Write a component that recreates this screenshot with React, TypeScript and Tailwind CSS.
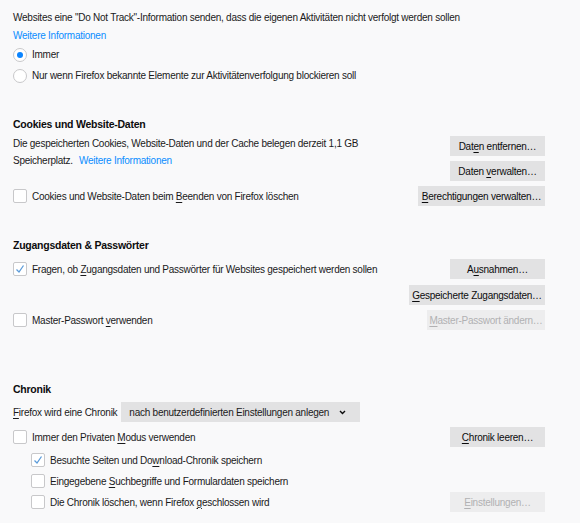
import React from "react";

const font = { fontFamily: '"Liberation Sans", Arial, sans-serif' };

function U({ children }: { children: React.ReactNode }) {
  return <span className="underline underline-offset-2">{children}</span>;
}

function Btn({
  children,
  disabled,
  className = "",
}: {
  children: React.ReactNode;
  disabled?: boolean;
  className?: string;
}) {
  return (
    <div
      className={`flex h-[20px] items-center justify-center whitespace-nowrap ${
        disabled ? "bg-[#ededee] text-[#b1b1b3]" : "bg-[#e2e2e3] text-[#0c0c0d]"
      } ${className}`}
    >
      <span>{children}</span>
    </div>
  );
}

function Check({ checked }: { checked?: boolean }) {
  return (
    <div className="flex h-[14px] w-[14px] shrink-0 items-center justify-center rounded-[2px] border border-[#c8c8ca] bg-white">
      {checked && (
        <svg width="10" height="10" viewBox="0 0 10 10">
          <path d="M1.5 5.5 L4 8 L8.5 1.5" fill="none" stroke="#5b9bd9" strokeWidth="1.3" />
        </svg>
      )}
    </div>
  );
}

function Radio({ checked }: { checked?: boolean }) {
  return (
    <div className="flex h-[14px] w-[14px] shrink-0 items-center justify-center rounded-full border border-[#c8c8ca] bg-white">
      {checked && <div className="h-[6px] w-[6px] rounded-full bg-[#0a84ff]" />}
    </div>
  );
}

function Header({ children, className = "" }: { children: React.ReactNode; className?: string }) {
  return (
    <div className={`flex h-[20px] items-center text-[10.5px] font-bold text-[#0c0c0d] ${className}`}>
      {children}
    </div>
  );
}

export default function App() {
  return (
    <div
      className="min-h-[523px] w-[580px] bg-[#f9f9fa] pt-[8px] pl-[13px] pr-[35px] text-[10px] tracking-[-0.25px] text-[#1a1a1b]"
      style={font}
    >
      {/* Do Not Track */}
      <div className="flex h-[18px] items-center whitespace-nowrap">
        Websites eine "Do Not Track"-Information senden, dass die eigenen Aktivitäten nicht verfolgt werden sollen
      </div>
      <div className="flex h-[18px] items-center text-[#0a8dff]">Weitere Informationen</div>
      <div className="flex h-[21px] items-center gap-[5px]">
        <Radio checked />
        <span>Immer</span>
      </div>
      <div className="flex h-[21px] items-center gap-[5px]">
        <Radio />
        <span>Nur wenn Firefox bekannte Elemente zur Aktivitätenverfolgung blockieren soll</span>
      </div>

      {/* Cookies */}
      <Header className="mt-[29px]">Cookies und Website-Daten</Header>
      <div className="flex justify-between">
        <div>
          <div className="flex h-[17px] items-center">
            Die gespeicherten Cookies, Website-Daten und der Cache belegen derzeit 1,1 GB
          </div>
          <div className="flex h-[17px] items-center">
            Speicherplatz.<span className="ml-[6px] text-[#0a8dff]">Weitere Informationen</span>
          </div>
        </div>
        <div className="mt-[1px] flex flex-col gap-[5px]">
          <Btn className="w-[95px]">
            Dat<U>e</U>n entfernen…
          </Btn>
          <Btn className="w-[95px]">
            Daten <U>v</U>erwalten…
          </Btn>
        </div>
      </div>
      <div className="mt-[5px] flex items-center justify-between">
        <div className="flex items-center gap-[5px]">
          <Check />
          <span>
            Cookies und Website-Daten beim <U>B</U>eenden von Firefox löschen
          </span>
        </div>
        <Btn className="w-[127px]">
          <U>B</U>erechtigungen verwalten…
        </Btn>
      </div>

      {/* Passwords */}
      <Header className="mt-[30px]">Zugangsdaten &amp; Passwörter</Header>
      <div className="mt-[3px] flex items-center justify-between">
        <div className="flex items-center gap-[5px]">
          <Check checked />
          <span>
            Fragen, ob <U>Z</U>ugangsdaten und Passwörter für Websites gespeichert werden sollen
          </span>
        </div>
        <Btn className="w-[95px]">
          A<U>u</U>snahmen…
        </Btn>
      </div>
      <div className="mt-[6px] flex justify-end">
        <Btn className="w-[136px]">
          <U>G</U>espeicherte Zugangsdaten…
        </Btn>
      </div>
      <div className="mt-[5px] flex items-center justify-between">
        <div className="flex items-center gap-[5px]">
          <Check />
          <span>
            Master-Passwort <U>v</U>erwenden
          </span>
        </div>
        <Btn disabled className="w-[118px]">
          <U>M</U>aster-Passwort ändern…
        </Btn>
      </div>

      {/* History */}
      <Header className="mt-[50px]">Chronik</Header>
      <div className="mt-[2px] flex h-[20px] items-center">
        <span>
          <U>F</U>irefox wird eine Chronik
        </span>
        <div className="ml-[4px] flex h-[20px] w-[239px] items-center justify-between whitespace-nowrap bg-[#e2e2e3] pl-[8px] pr-[14px]">
          <span>nach benutzerdefinierten Einstellungen anlegen</span>
          <svg width="7" height="5" viewBox="0 0 7 5">
            <path d="M1 1 L3.5 3.5 L6 1" fill="none" stroke="#0c0c0d" strokeWidth="1.4" />
          </svg>
        </div>
      </div>
      <div className="mt-[5px] flex items-center justify-between">
        <div className="flex items-center gap-[5px]">
          <Check />
          <span>
            Immer den Privaten <U>M</U>odus verwenden
          </span>
        </div>
        <Btn className="w-[95px]">
          <U>C</U>hronik leeren…
        </Btn>
      </div>
      <div className="mt-[3px] flex h-[20px] items-center gap-[5px] pl-[18px]">
        <Check checked />
        <span>
          Besuchte Seiten und Do<U>w</U>nload-Chronik speichern
        </span>
      </div>
      <div className="mt-[1px] flex h-[20px] items-center gap-[5px] pl-[18px]">
        <Check />
        <span>
          Eingegebene <U>S</U>uchbegriffe und Formulardaten speichern
        </span>
      </div>
      <div className="mt-[1px] flex items-center justify-between">
        <div className="flex items-center gap-[5px] pl-[18px]">
          <Check />
          <span>
            Die Chronik löschen, wenn Firefox <U>g</U>eschlossen wird
          </span>
        </div>
        <Btn disabled className="w-[95px]">
          <U>E</U>instellungen…
        </Btn>
      </div>
    </div>
  );
}
